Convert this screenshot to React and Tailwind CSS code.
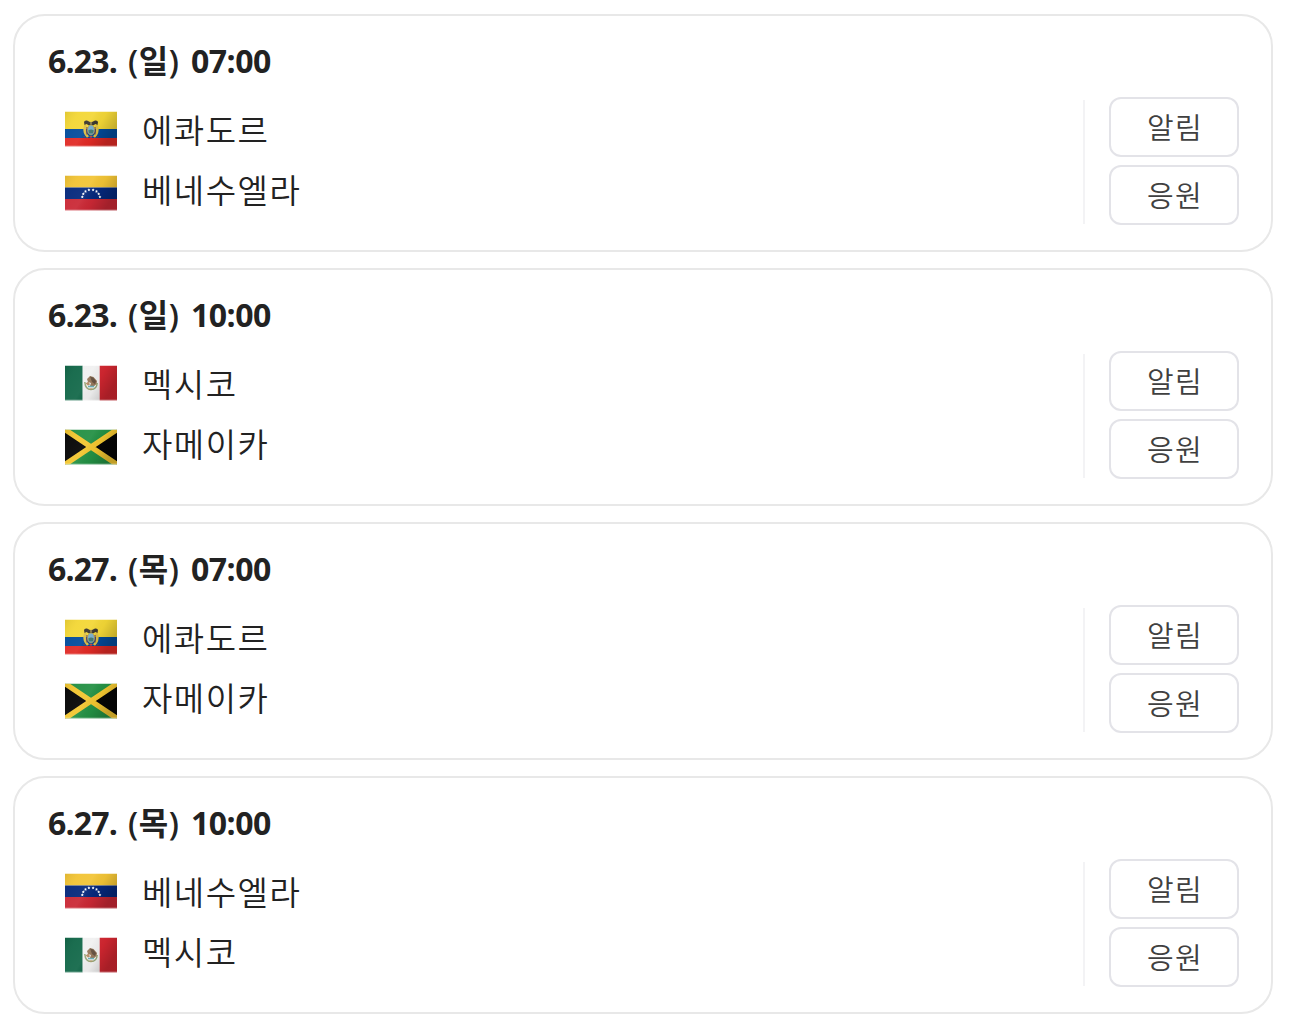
const teams = {
  ecuador: { name: "에콰도르", flag: EcuadorFlag },
  venezuela: { name: "베네수엘라", flag: VenezuelaFlag },
  mexico: { name: "멕시코", flag: MexicoFlag },
  jamaica: { name: "자메이카", flag: JamaicaFlag },
};

const matches = [
  { date: "6.23.", day: "일", time: "07:00", home: "ecuador", away: "venezuela" },
  { date: "6.23.", day: "일", time: "10:00", home: "mexico", away: "jamaica" },
  { date: "6.27.", day: "목", time: "07:00", home: "ecuador", away: "jamaica" },
  { date: "6.27.", day: "목", time: "10:00", home: "venezuela", away: "mexico" },
];

function FlagFrame({ children }) {
  return (
    <svg viewBox="0 0 52 36" className="w-[52px] h-9 shrink-0">
      <defs>
        <linearGradient id="flag-shine" x1="0" y1="0" x2="1" y2="0.4">
          <stop offset="0" stopColor="#000" stopOpacity="0.08" />
          <stop offset="0.25" stopColor="#fff" stopOpacity="0.04" />
          <stop offset="0.5" stopColor="#fff" stopOpacity="0.06" />
          <stop offset="0.7" stopColor="#000" stopOpacity="0.03" />
          <stop offset="1" stopColor="#000" stopOpacity="0.2" />
        </linearGradient>
      </defs>
      {children}
      <rect y="0.5" width="52" height="35" fill="url(#flag-shine)" />
      <path d="M0 .5H52M0 35.2H52" stroke="#fff" strokeOpacity="0.5" />
    </svg>
  );
}

function EcuadorFlag() {
  return (
    <FlagFrame>
      <path d="M0 .5H52V18H0z" fill="#f3d736" />
      <path d="M0 18H52V27H0z" fill="#024b9b" />
      <path d="M0 27H52V35.5H0z" fill="#e12a25" />
      {/* Coat of arms */}
      <path d="M20.500 14q-2 6 .5 9.500l2 2.500M31.500 14q2 6-.5 9.500l-2 2.500" fill="none" stroke="#dcbf45" strokeWidth="2.600" />
      <path d="M22 16v7.500M30 16v7.500" stroke="#71444f" strokeWidth="1.200" />
      <path d="M19 11q.5-2 3-1.500l3 1.500h2l3-1.500q2.500-.5 3 1.500l-.5 3-2-1-2.500 1.500-2-1-2 1-2.500-1.500-2 1z" fill="#38342c" />
      <path d="M18.500 25.500l2 .5M33.500 25.500l-2 .5" stroke="#6d4450" />
      <ellipse cx="26" cy="19" rx="3.500" ry="5" fill="#79b0cf" stroke="#b49a48" strokeWidth=".8" />
      <path d="M23.200 19.500q2.800-2 5.600 0l-1 3h-3.600z" fill="#467c72" />
      <path d="M24 25h4l-2 2z" fill="#c94a44" />
      <circle cx="26" cy="12" r="1.200" fill="#8d7946" />
    </FlagFrame>
  );
}

const stars = [
  [17.3, 21.8], [18.3, 18.8], [20.5, 16.3], [23.9, 14.8],
  [28.1, 14.8], [31.5, 16.3], [33.7, 18.8], [34.9, 21.8],
];

function VenezuelaFlag() {
  return (
    <FlagFrame>
      <path d="M0 .5H52V12.500H0z" fill="#f2c435" />
      <path d="M0 12.500H52V24H0z" fill="#05287c" />
      <path d="M0 24H52V35.500H0z" fill="#ca2835" />
      {stars.map(([x, y]) => (
        <path
          key={x}
          transform={`translate(${x} ${y})`}
          d="M0-1.500l.45.95 1.050.1-.75.75.2 1.100L0 .9l-.95.5.2-1.100-.75-.75 1.050-.1z"
          fill="#fff"
        />
      ))}
    </FlagFrame>
  );
}

function MexicoFlag() {
  return (
    <FlagFrame>
      <path d="M0 .5H17.700V35.500H0z" fill="#126849" />
      <path d="M17.700 .5H34.700V35.500H17.700z" fill="#f0f0f0" />
      <path d="M34.700 .5H52V35.500H34.700z" fill="#d12630" />
      {/* Eagle over the laurel wreath */}
      <path d="M19.800 17q.5 7.500 6.200 7.500 5.700 0 6.200-6.500" fill="none" stroke="#94a675" strokeWidth="1.500" />
      <path d="M22 14l3-3 3.500 1 3.500 4-.5 3-3.500 3-3-1 1-3-3-1z" fill="#967759" />
      <path d="M25 11.500l3 1 3 3.500-1 3-3-2z" fill="#655141" />
      <path d="M20.500 18.500l3-2 1.500 3-2 1z" fill="#b98e67" />
      <path d="M23 21.500h6" stroke="#69b2ba" strokeWidth="1.500" />
      <path d="M24.500 24h3" stroke="#c19c68" />
    </FlagFrame>
  );
}

function JamaicaFlag() {
  return (
    <FlagFrame>
      <path d="M0 .5H52V35.500H0z" fill="#239044" />
      <path d="M0 .5L26 18 0 35.500zM52 .5L26 18 52 35.500z" fill="#050505" />
      <svg y="0.5" width="52" height="35" viewBox="0 0 52 35">
        <path d="M0 0L52 35M52 0L0 35" stroke="#f2c630" strokeWidth="5.200" />
      </svg>
    </FlagFrame>
  );
}

function TeamRow({ team, nameClass }) {
  const { name, flag: Flag } = teams[team];
  return (
    <div className="flex h-9 items-center gap-[25px]">
      <Flag />
      <span className={`text-[33px] leading-9 font-[350] tracking-[1.5px] ${nameClass}`}>{name}</span>
    </div>
  );
}

function ActionButton({ children }) {
  return (
    <button className="flex h-[60px] w-[130px] items-center justify-center rounded-xl border-2 border-[#e3e3e8] bg-white pb-0.5 pl-0.5 text-[29px] leading-9 font-[350] tracking-[1.2px] text-[#404040]">
      {children}
    </button>
  );
}

function MatchCard({ match }) {
  return (
    <li className="h-[238px] rounded-[32px] border-2 border-[#e8e8e8] bg-white px-8 pt-[25px]">
      <h2 className="flex h-10 items-center pl-px font-['Open_Sans','Noto_Sans_CJK_KR',sans-serif] text-[32px] leading-10 font-bold">
        <span className="w-20 tracking-[-0.8px]">{match.date}</span>
        <span className="w-[63px] font-semibold tracking-[0.6px]">({match.day})</span>
        <span className="tracking-[-0.5px]">{match.time}</span>
      </h2>
      <div className="mt-4 flex justify-between">
        <div className="flex flex-col gap-7 pt-3.5 pl-[18px]">
          <TeamRow team={match.home} nameClass="pb-px" />
          <TeamRow team={match.away} nameClass="pb-2" />
        </div>
        <div className="flex items-center">
          <div className="mt-0.5 mr-6 h-[124px] w-0.5 bg-[#f3f3f5]" />
          <div className="flex flex-col gap-2">
            <ActionButton>알림</ActionButton>
            <ActionButton>응원</ActionButton>
          </div>
        </div>
      </div>
    </li>
  );
}

export default function App() {
  return (
    <main className="min-h-screen bg-white pt-3.5 pr-[26px] pl-[13px] font-['Noto_Sans_CJK_KR',sans-serif] text-[#222]">
      <ul className="flex flex-col gap-4">
        {matches.map((match) => (
          <MatchCard key={`${match.date}-${match.time}`} match={match} />
        ))}
      </ul>
    </main>
  );
}
